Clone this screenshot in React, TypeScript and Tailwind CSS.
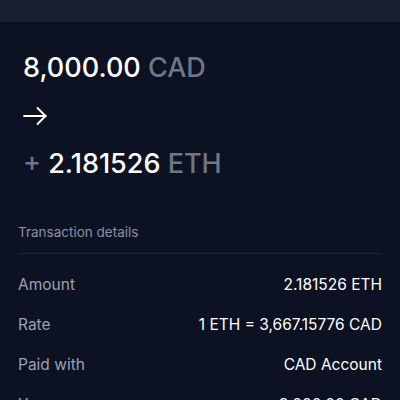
import React from "react";

const rows = [
  { label: "Amount", value: "2.181526 ETH" },
  { label: "Rate", value: "1 ETH = 3,667.15776 CAD" },
  { label: "Paid with", value: "CAD Account" },
  { label: "You pay", value: "8,000.00 CAD" },
];

const App = () => {
  return (
    <div
      className="w-[400px] h-[400px] overflow-hidden bg-[#0c1222] text-white"
      style={{ fontFamily: "Inter, 'Noto Sans', sans-serif" }}
    >
      <div className="h-[22px] bg-[#1a2032]" />

      <div className="px-[23px] pt-[29px]">
        <div className="text-[27px] font-medium leading-[34px]">
          8,000.00 <span className="text-[#6f7787]">CAD</span>
        </div>
        <div className="mt-[19px] h-[24px]">
          <svg width="25" height="24" viewBox="0 0 25 24" fill="none">
            <path
              d="M1 12h22M14.5 4l8 8-8 8"
              stroke="white"
              strokeWidth="1.8"
              strokeLinecap="round"
              strokeLinejoin="round"
            />
          </svg>
        </div>
        <div className="mt-[19px] text-[27px] font-medium leading-[34px]">
          <span className="text-[#6f7787]">+</span> 2.181526{" "}
          <span className="text-[#6f7787]">ETH</span>
        </div>
      </div>

      <div className="px-[18px] mt-[41px]">
        <div className="text-[13.5px] text-[#8a92a3] leading-[20px]">
          Transaction details
        </div>
        <div className="mt-[11px] h-px bg-[#1f2738]" />
        <div className="mt-[11px]">
          {rows.map((r) => (
            <div
              key={r.label}
              className="flex justify-between items-center h-[40px] text-[15.5px]"
            >
              <span className="text-[#9aa1af]">{r.label}</span>
              <span className="text-white">{r.value}</span>
            </div>
          ))}
        </div>
      </div>
    </div>
  );
};

export default App;
